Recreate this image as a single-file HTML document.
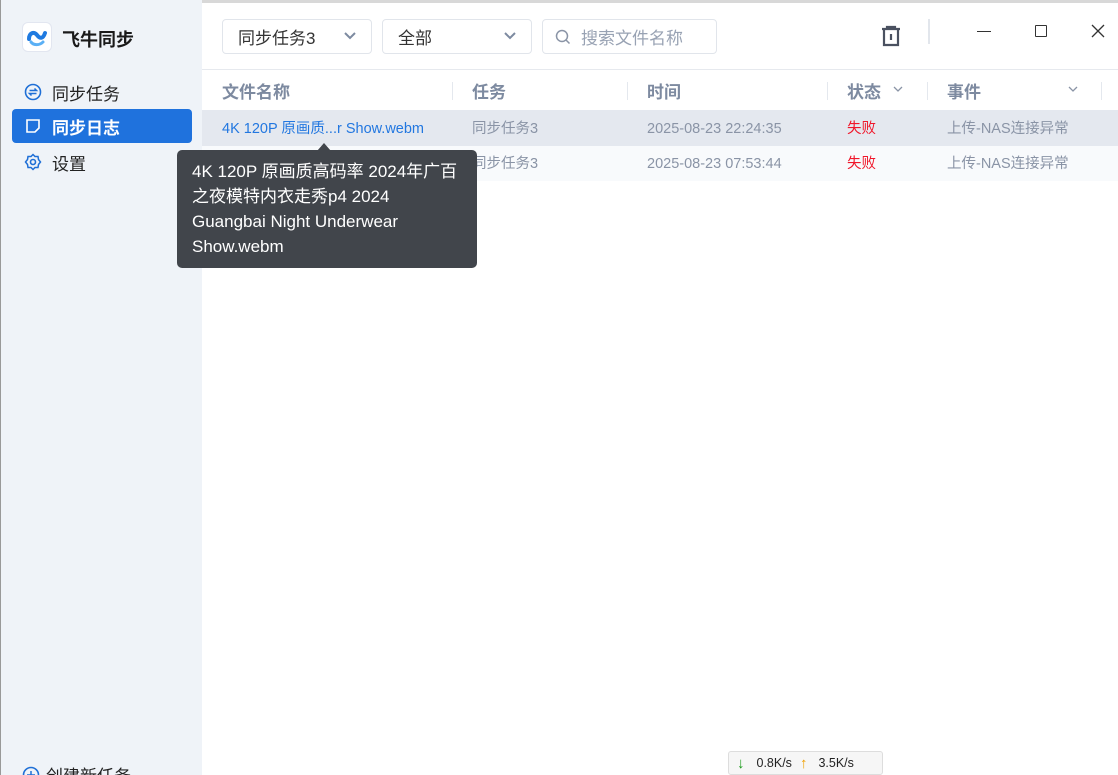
<!DOCTYPE html>
<html style="overflow:hidden;height:775px"><head><meta charset="utf-8"><style>
*{margin:0;padding:0;box-sizing:border-box}
body{width:1118px;height:775px;overflow:hidden;background:#fff;font-family:"Liberation Sans","Noto Sans CJK SC",sans-serif;position:relative}
.abs{position:absolute}
.side{left:0;top:0;width:202px;height:775px;background:#eff3f8;border-left:1px solid #999}
.topline{left:0;top:0;width:1118px;height:3px;background:#d8d8d8}
.nav{left:12px;width:180px;height:34px;font-size:17px;color:#222;display:flex;align-items:center;padding-left:12px;border-radius:4px}
.nav span{margin-left:10px}
.sel{height:35px;border:1px solid #e1e5eb;border-radius:4px;font-size:17px;color:#333;display:flex;align-items:center;padding-left:15px}
.th{top:70px;height:40px;font-size:17px;font-weight:bold;color:#7d8aa0;display:flex;align-items:center}
.sep{top:82px;width:1px;height:18px;background:#e4e8ee}
.cell{font-size:14.5px;color:#8a94a6;height:20px;line-height:20px;display:flex;align-items:center}
</style></head><body>
<div class="abs topline"></div>
<div class="abs side"></div>
<div class="abs" style="left:22px;top:22px;width:30px;height:30px;background:#fff;border:1px solid #e2e6f0;border-radius:6px">
<svg width="28" height="28" viewBox="0 0 28 28"><path d="M6 16c0-6 5-8 8-4s6 4 8-2" stroke="#1f7ae0" stroke-width="4" fill="none" stroke-linecap="round"/><path d="M8 19c2 3 8 4 12 0" stroke="#5bb0f5" stroke-width="3" fill="none" stroke-linecap="round"/></svg></div>
<div class="abs" style="left:62px;top:26px;font-size:18px;font-weight:bold;color:#1a1a1a">飞牛同步</div>
<div class="abs nav" style="top:75px"><svg width="18" height="18" viewBox="0 0 18 18"><circle cx="9" cy="9" r="7.5" stroke="#1f6fd6" stroke-width="1.6" fill="none"/><path d="M5.5 7.5h7l-2-2M12.5 10.5h-7l2 2" stroke="#1f6fd6" stroke-width="1.5" fill="none"/></svg><span>同步任务</span></div>
<div class="abs nav" style="top:109px;background:#1f72dd;color:#fff;font-weight:bold"><svg width="18" height="18" viewBox="0 0 18 18"><path d="M3 3h12v8l-4 4H3z" stroke="#fff" stroke-width="1.6" fill="none"/></svg><span>同步日志</span></div>
<div class="abs nav" style="top:145px"><svg width="18" height="18" viewBox="0 0 18 18"><circle cx="9" cy="9" r="2.5" stroke="#1f6fd6" stroke-width="1.6" fill="none"/><path d="M9 1.5l2 2 3 0 .5 3 2 2.5-2 2.5-.5 3-3 0-2 2-2-2-3 0-.5-3-2-2.5 2-2.5.5-3 3 0z" stroke="#1f6fd6" stroke-width="1.5" fill="none"/></svg><span>设置</span></div>
<div class="abs" style="left:22px;top:762px;font-size:17px;color:#222;display:flex;align-items:center;white-space:nowrap"><svg width="18" height="18" viewBox="0 0 18 18"><circle cx="9" cy="9" r="7.5" stroke="#1f6fd6" stroke-width="1.6" fill="none"/><path d="M9 5v8M5 9h8" stroke="#1f6fd6" stroke-width="1.5"/></svg><span style="margin-left:6px">创建新任务</span></div>

<div class="abs sel" style="left:222px;top:19px;width:150px">同步任务3<svg class="abs" style="left:120px;top:11px" width="14" height="10" viewBox="0 0 14 10"><path d="M2 2l5 5 5-5" stroke="#7d8aa0" stroke-width="2" fill="none"/></svg></div>
<div class="abs sel" style="left:382px;top:19px;width:150px">全部<svg class="abs" style="left:120px;top:11px" width="14" height="10" viewBox="0 0 14 10"><path d="M2 2l5 5 5-5" stroke="#7d8aa0" stroke-width="2" fill="none"/></svg></div>
<div class="abs sel" style="left:542px;top:19px;width:175px;color:#98a2b3;padding-left:12px"><svg width="16" height="16" viewBox="0 0 16 16"><circle cx="7" cy="7" r="5.5" stroke="#8a94a6" stroke-width="1.5" fill="none"/><path d="M11 11l3.5 3.5" stroke="#8a94a6" stroke-width="1.5"/></svg><span style="margin-left:10px">搜索文件名称</span></div>
<svg class="abs" style="left:880px;top:24px" width="22" height="24" viewBox="0 0 22 24"><path d="M2 5h18M7 5V3h8v2M4 5v16h14V5M11 10v6" stroke="#4a5160" stroke-width="2.2" fill="none"/></svg>
<div class="abs" style="left:928px;top:19px;width:2px;height:25px;background:#e2e6ec"></div>
<div class="abs" style="left:977px;top:31px;width:14px;height:1px;background:#333"></div>
<div class="abs" style="left:1035px;top:25px;width:12px;height:12px;border:1.3px solid #333;border-radius:1px"></div>
<svg class="abs" style="left:1091px;top:24px" width="14" height="14" viewBox="0 0 14 14"><path d="M1 1l12 12M13 1L1 13" stroke="#333" stroke-width="1.3"/></svg>
<div class="abs" style="left:202px;top:69px;width:916px;height:1px;background:#e6e9ee"></div>

<div class="abs th" style="left:222px">文件名称</div>
<div class="abs sep" style="left:452px"></div>
<div class="abs th" style="left:472px">任务</div>
<div class="abs sep" style="left:627px"></div>
<div class="abs th" style="left:647px">时间</div>
<div class="abs sep" style="left:827px"></div>
<div class="abs th" style="left:847px">状态</div>
<svg class="abs" style="left:893px;top:86px" width="10" height="7" viewBox="0 0 10 7"><path d="M1 1l4 4 4-4" stroke="#8a94a6" stroke-width="1.3" fill="none"/></svg>
<div class="abs sep" style="left:927px"></div>
<div class="abs th" style="left:947px">事件</div>
<svg class="abs" style="left:1068px;top:86px" width="10" height="7" viewBox="0 0 10 7"><path d="M1 1l4 4 4-4" stroke="#8a94a6" stroke-width="1.3" fill="none"/></svg>
<div class="abs sep" style="left:1101px"></div>

<div class="abs" style="left:202px;top:110px;width:916px;height:36px;background:#e4e8ef"></div>
<div class="abs" style="left:202px;top:146px;width:916px;height:35px;background:#f8fafc"></div>
<div class="abs cell" style="left:222px;top:119px;color:#2277e0">4K 120P 原画质...r Show.webm</div>
<div class="abs cell" style="left:472px;top:119px">同步任务3</div>
<div class="abs cell" style="left:647px;top:119px">2025-08-23 22:24:35</div>
<div class="abs cell" style="left:847px;top:119px;color:#f0162a">失败</div>
<div class="abs cell" style="left:947px;top:119px">上传-NAS连接异常</div>
<div class="abs cell" style="left:472px;top:154px">同步任务3</div>
<div class="abs cell" style="left:647px;top:154px">2025-08-23 07:53:44</div>
<div class="abs cell" style="left:847px;top:154px;color:#f0162a">失败</div>
<div class="abs cell" style="left:947px;top:154px">上传-NAS连接异常</div>

<div class="abs" style="left:317px;top:143px;width:0;height:0;border-left:7px solid transparent;border-right:7px solid transparent;border-bottom:8px solid #41454b"></div>
<div class="abs" style="left:177px;top:150px;width:300px;height:118px;background:#41454b;border-radius:5px;color:#fff;font-size:17px;line-height:25px;padding:9px 15px">4K 120P 原画质高码率 2024年广百之夜模特内衣走秀p4 2024 Guangbai Night Underwear Show.webm</div>

<div class="abs" style="left:728px;top:751px;width:155px;height:24px;background:#f6f6f6;border:1px solid #ddd;border-radius:3px;font-size:12.5px;color:#222;display:flex;align-items:center;padding-left:8px">
<span style="color:#1a9a1a;font-weight:bold;font-size:15px">↓</span><span style="margin-left:12px">0.8K/s</span><span style="color:#f0a000;font-weight:bold;font-size:15px;margin-left:8px">↑</span><span style="margin-left:11px">3.5K/s</span></div>
</body></html>
